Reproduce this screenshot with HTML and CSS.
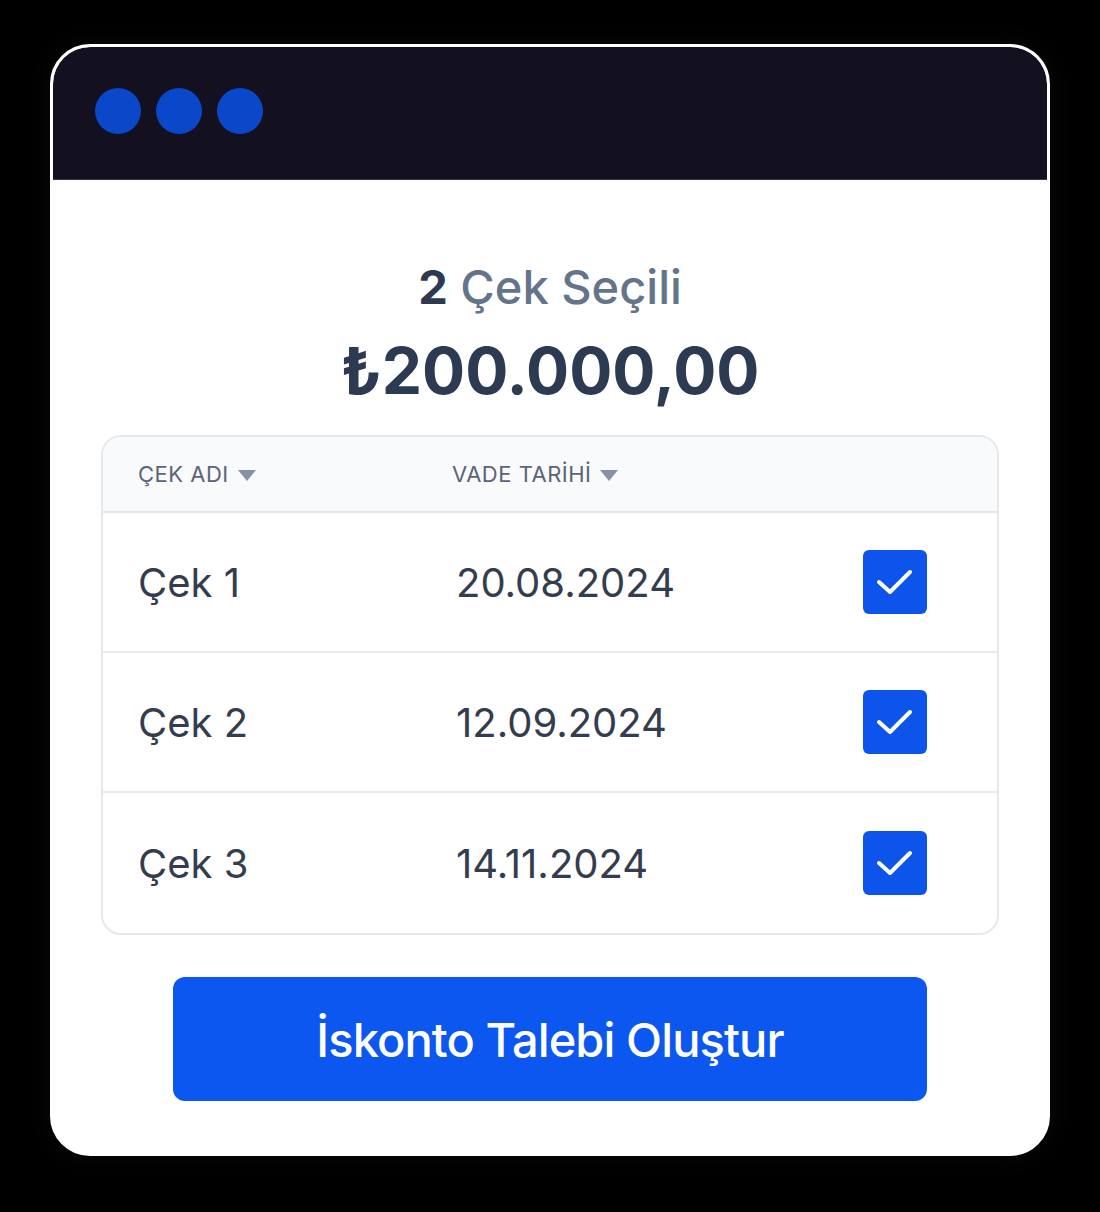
FILE: index.html
```html
<!DOCTYPE html>
<html lang="tr">
<head>
<meta charset="utf-8">
<link rel="stylesheet" href="styles.css">
</head>
<body>
<div class="card">
  <div class="titlebar">
    <span class="dot"></span><span class="dot"></span><span class="dot"></span>
  </div>
  <div class="content">
    <div class="count"><b>2</b> Çek Seçili</div>
    <div class="amount">₺200.000,00</div>
    <div class="table">
      <div class="thead">
        <div class="col1">ÇEK ADI <span class="caret"></span></div>
        <div class="col2">VADE TARİHİ <span class="caret"></span></div>
      </div>
      <div class="row">
        <div class="col1">Çek 1</div>
        <div class="col2">20.08.2024</div>
        <div class="check"><svg viewBox="0 0 64 64" width="64" height="64"><path d="M16 32 L27 42 L47 22" fill="none" stroke="#fff" stroke-width="4" stroke-linecap="round" stroke-linejoin="round"/></svg></div>
      </div>
      <div class="row">
        <div class="col1">Çek 2</div>
        <div class="col2">12.09.2024</div>
        <div class="check"><svg viewBox="0 0 64 64" width="64" height="64"><path d="M16 32 L27 42 L47 22" fill="none" stroke="#fff" stroke-width="4" stroke-linecap="round" stroke-linejoin="round"/></svg></div>
      </div>
      <div class="row">
        <div class="col1">Çek 3</div>
        <div class="col2">14.11.2024</div>
        <div class="check"><svg viewBox="0 0 64 64" width="64" height="64"><path d="M16 32 L27 42 L47 22" fill="none" stroke="#fff" stroke-width="4" stroke-linecap="round" stroke-linejoin="round"/></svg></div>
      </div>
    </div>
    <button class="btn">İskonto Talebi Oluştur</button>
  </div>
</div>
</body>
</html>
```

FILE: styles.css
```css
html, body {
  margin: 0;
  padding: 0;
  background: #000;
}
body {
  font-family: Inter, "Noto Sans", sans-serif;
  padding: 44px 50px 0 50px;
  height: 1212px;
  box-sizing: border-box;
}
.card {
  width: 1000px;
  height: 1112px;
  box-sizing: border-box;
  background: #fff;
  border: 3px solid #fff;
  border-radius: 40px;
  overflow: hidden;
  box-shadow: 0 0 30px rgba(255,255,255,0.04);
}
.titlebar {
  height: 133px;
  background: #13111f;
  border-radius: 37px 37px 0 0;
  display: flex;
  align-items: center;
  gap: 15px;
  padding: 0 0 4px 42px;
  box-sizing: border-box;
  border-bottom: 1px solid #3a3848;
}
.dot {
  width: 46px;
  height: 46px;
  border-radius: 50%;
  background: #0a47c9;
}
.content {
  display: flex;
  flex-direction: column;
  align-items: center;
  padding-top: 79px;
}
.count {
  font-size: 47px;
  line-height: 56px;
  color: #64748b;
  font-weight: 500;
}
.count b {
  color: #2d3a50;
  font-weight: 700;
}
.amount {
  margin-top: 20px;
  font-size: 64px;
  line-height: 72px;
  font-weight: 700;
  color: #2d3b52;
  letter-spacing: 0;
}
.table {
  margin-top: 28px;
  width: 898px;
  box-sizing: border-box;
  border: 2px solid #e6e8ec;
  border-radius: 20px;
  overflow: hidden;
}
.thead {
  height: 74px;
  background: #f8fafc;
  display: flex;
  align-items: center;
  border-bottom: 2px solid #e6e8ec;
  font-size: 22px;
  color: #5b6478;
  letter-spacing: 0.5px;
}
.col1 {
  width: 349px;
  padding-left: 35px;
  box-sizing: border-box;
  display: flex;
  align-items: center;
  gap: 9px;
}
.col2 {
  flex: 1;
  display: flex;
  align-items: center;
  gap: 9px;
}
.caret {
  width: 0;
  height: 0;
  border-left: 9px solid transparent;
  border-right: 9px solid transparent;
  border-top: 11px solid #8791a5;
  margin-top: 2px;
}
.row {
  height: 140px;
  display: flex;
  align-items: center;
  font-size: 40px;
  color: #333d4f;
  border-bottom: 2px solid #e9ebef;
  box-sizing: border-box;
}
.row:last-child {
  border-bottom: none;
}
.row .col2 {
  padding-left: 4px;
}
.check {
  width: 64px;
  height: 64px;
  border-radius: 6px;
  background: #0d55ea;
  margin-right: 70px;
  display: flex;
}
.btn {
  margin-top: 42px;
  width: 754px;
  height: 124px;
  border: none;
  border-radius: 12px;
  background: #0b57f0;
  color: #fff;
  font-family: Inter, "Noto Sans", sans-serif;
  font-size: 47px;
  font-weight: 500;
  letter-spacing: -0.9px;
  padding: 0;
}
```
